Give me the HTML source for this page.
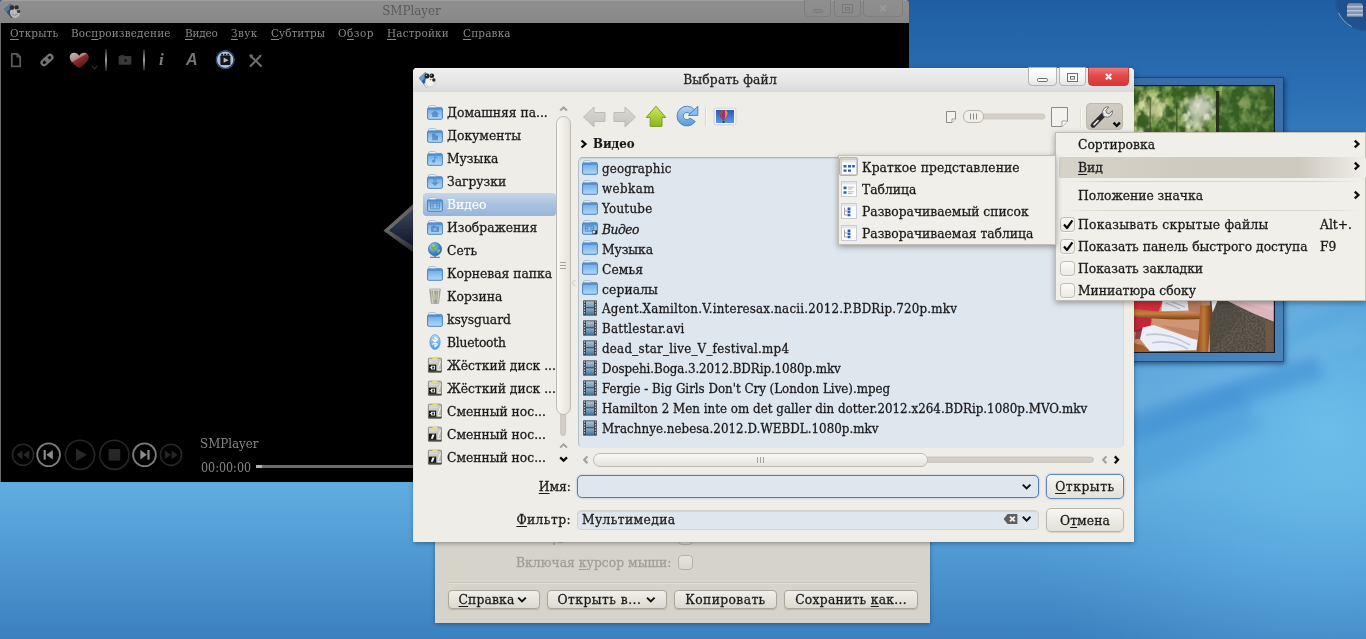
<!DOCTYPE html>
<html lang="ru">
<head>
<meta charset="utf-8">
<title>SMPlayer</title>
<style>
html,body{margin:0;padding:0;}
body{width:1366px;height:639px;overflow:hidden;position:relative;font-family:"DejaVu Serif Condensed","Liberation Serif",serif;font-size:13.7px;color:#1a1a1a;background:#3c80bf;-webkit-text-stroke:.28px;}
.abs{position:absolute;}
u{text-decoration:underline;text-underline-offset:2px;text-decoration-thickness:1px;}
#desk{position:absolute;left:0;top:0;width:1366px;height:639px;background:linear-gradient(180deg,#1f5ea2 0px,#2a6cb1 75px,#3f8acb 250px,#5ba8dc 440px,#60acde 485px,#4e98d2 560px,#3c80bf 639px);}
/* ===== smplayer ===== */
#smp{-webkit-text-stroke:0;position:absolute;left:0;top:0;width:909px;height:482px;background:#000;border-radius:3px 3px 0 0;box-shadow:inset 1px 0 0 #6a6a6a;}
#smp .tb{position:absolute;left:0;top:0;width:909px;height:22.6px;background:linear-gradient(180deg,#a6a6a6 0,#8e8e8e 1.5px,#8c8c8c 50%,#868686 100%);border-radius:3px 3px 0 0;}
#smp .title{position:absolute;left:0;width:823px;top:0;height:22px;line-height:22px;text-align:center;color:#5a5a5a;font-size:13.2px;}
#smp .menu{position:absolute;top:24px;height:18px;line-height:18px;color:#8a8a8a;font-size:11.6px;white-space:nowrap;}
.swb{top:-1px;height:17.6px;box-sizing:border-box;border:1px solid #7d7d7d;border-radius:0 0 4px 4px;background:linear-gradient(180deg,#8f8f8f,#8a8a8a);}
/* ===== back dialog ===== */
#back{position:absolute;left:435px;top:500px;width:495px;height:123px;background:#d6d3ca;box-shadow:0 1px 4px rgba(0,0,0,.35);}
.bbtn{position:absolute;top:590px;height:17px;line-height:17px;border:1px solid #aaa69c;border-radius:4px;background:linear-gradient(180deg,#f1efea,#dcd9d0);text-align:center;white-space:nowrap;box-shadow:0 1px 1px rgba(0,0,0,.15);}
/* ===== file dialog ===== */
#dlg{position:absolute;left:414px;top:68px;width:720px;height:474px;background:#efede8;border-radius:4px 4px 0 0;box-shadow:-1px 0 0 #e9e7e2,0 1px 5px rgba(0,0,0,.38);}
#dlg .tb{position:absolute;left:-1px;top:0;width:721px;height:24px;border-radius:4px 4px 0 0;background:linear-gradient(180deg,#f6f6f6 0,#ededed 8%,#e6e6e6 55%,#d9d9d9 100%);}
#dlg .title{position:absolute;left:-1px;top:0;width:634px;height:23px;line-height:23px;text-align:center;font-size:13.7px;color:#222;letter-spacing:.15px;}
.side{position:absolute;left:33px;height:23px;line-height:23px;white-space:nowrap;margin-top:-.2px;}
.row{position:absolute;left:188px;height:20px;line-height:20px;white-space:nowrap;font-size:13.2px;}
.row.c{font-size:13.7px;}
.wb{top:-1px;height:19px;box-sizing:border-box;border:1px solid #b4b4b4;border-radius:0 0 4px 4px;background:linear-gradient(180deg,#ffffff,#f6f6f6 50%,#e6e6e6);}
#flist{background:#dfe7ee;border:1px solid;border-color:#a7b4c1 #d3dae1 #e2e6ea #b3bfca;border-radius:5px;box-sizing:border-box;box-shadow:inset 0 1px 1px rgba(0,0,0,.08);}
.lbl{height:21px;line-height:21px;text-align:right;white-space:nowrap;}
.dbtn{width:78px;height:24.5px;line-height:23px;box-sizing:border-box;border:1px solid #b9b5aa;border-radius:5px;background:linear-gradient(180deg,#f7f6f3,#e3e0d8);text-align:center;box-shadow:0 1px 1px rgba(0,0,0,.12);}
/* ===== menus ===== */
.pop{position:absolute;background:#f1efea;border:1px solid #c2beb4;box-shadow:0 2px 6px rgba(0,0,0,.35);box-sizing:border-box;}
.mi{position:absolute;height:22px;line-height:22px;white-space:nowrap;margin-top:-.5px;}
.cb{position:absolute;width:15px;height:15px;margin:-.3px 0 0 .3px;box-sizing:border-box;border:1px solid #c0bcb1;border-radius:3.5px;box-shadow:0 1px 0 rgba(255,255,255,.7);background:linear-gradient(180deg,#fbfaf8,#eceae4);}
</style>
</head>
<body>
<div id="root" style="position:absolute;left:0;top:0;width:1366px;height:639px;overflow:hidden;will-change:transform">
<svg width="0" height="0" style="position:absolute">
<defs>
  <linearGradient id="gf" x1="0" y1="0" x2="0" y2="1"><stop offset="0" stop-color="#5f9fdc"/><stop offset=".25" stop-color="#78b4ea"/><stop offset="1" stop-color="#b4d8f6"/></linearGradient>
  <linearGradient id="gfilm1" x1="0" y1="0" x2="0" y2="1"><stop offset="0" stop-color="#b0c4d0"/><stop offset="1" stop-color="#6c96b0"/></linearGradient>
  <linearGradient id="gfilm2" x1="0" y1="0" x2="0" y2="1"><stop offset="0" stop-color="#8eb0c6"/><stop offset="1" stop-color="#3f7698"/></linearGradient>
  <linearGradient id="ggrey" x1="0" y1="0" x2="0" y2="1"><stop offset="0" stop-color="#dcdad4"/><stop offset="1" stop-color="#c4c2bb"/></linearGradient>
  <linearGradient id="ggreen" x1="0" y1="0" x2="0" y2="1"><stop offset="0" stop-color="#d2e860"/><stop offset="1" stop-color="#8cb61e"/></linearGradient>
  <linearGradient id="gblue" x1="0" y1="0" x2="0" y2="1"><stop offset="0" stop-color="#b2d2f2"/><stop offset="1" stop-color="#5c98d8"/></linearGradient>
  <linearGradient id="gprev" x1="0" y1="0" x2="0" y2="1"><stop offset="0" stop-color="#2a56b4"/><stop offset="1" stop-color="#5a9ae6"/></linearGradient>
  <symbol id="folder" viewBox="0 0 16 16">
    <path d="M1.5 3.2 Q1.5 1.6 3 1.6 L7.6 1.6 Q8.6 1.6 9 2.6 L9.4 3.4 L14.5 3.4 L14.5 5 L1.5 5 Z" fill="#f4f8fc" stroke="#8fb2d6" stroke-width=".8"/>
    <rect x=".6" y="3.9" width="14.8" height="11.4" rx="1.2" fill="url(#gf)" stroke="#3f78b4" stroke-width=".9"/>
    <rect x="1.2" y="4.5" width="13.6" height="1.3" fill="#4a86c8" opacity=".75"/>
  </symbol>
  <symbol id="film" viewBox="0 0 16 16">
    <rect x="1.2" y=".4" width="13.6" height="15.2" fill="#3b3d48"/>
    <rect x="4" y="1.3" width="8" height="6" fill="url(#gfilm1)"/>
    <rect x="4" y="8.3" width="8" height="6.6" fill="url(#gfilm2)"/>
    <path d="M2.6 1.4v13.4M13.4 1.4v13.4" stroke="#d8dce4" stroke-width="1" stroke-dasharray="1.4 1.3"/>
  </symbol>
  <symbol id="f-home" viewBox="0 0 16 16"><use href="#folder"/><path d="M8 6.4 L12.2 10 L10.8 10 L10.8 13 L5.2 13 L5.2 10 L3.8 10 Z" fill="#3a6fb2" opacity=".6"/></symbol>
  <symbol id="f-doc" viewBox="0 0 16 16"><use href="#folder"/><path d="M5.2 6.6h3.2v2h2.6v4.6h-5.8z" fill="#3a6fb2" opacity=".6"/></symbol>
  <symbol id="f-music" viewBox="0 0 16 16"><use href="#folder"/><path d="M8.2 6.2 L8.2 11.2 A1.6 1.4 0 1 1 7.2 10 L7.2 6.2 Q10 6.6 11 9 Q9.6 7.8 8.2 7.8Z" fill="#3a6fb2" opacity=".6"/></symbol>
  <symbol id="f-down" viewBox="0 0 16 16"><use href="#folder"/><path d="M6 6.6h4v2.6h2L8 13 4 9.2h2z" fill="#3a6fb2" opacity=".6"/><path d="M5 7.8h6M5 9h6" stroke="#9cc4ea" stroke-width=".5"/></symbol>
  <symbol id="f-video" viewBox="0 0 16 16"><use href="#folder"/><rect x="3.6" y="7" width="8.8" height="6" fill="none" stroke="#3a6fb2" stroke-width="1" opacity=".6"/><path d="M6.2 7v6M9.8 7v6M3.6 10h2.6M9.8 10h2.6" stroke="#3a6fb2" stroke-width=".9" opacity=".6"/></symbol>
  <symbol id="f-img" viewBox="0 0 16 16"><use href="#folder"/><rect x="4" y="7.6" width="8" height="5.4" rx=".8" fill="#3a6fb2" opacity=".6"/><rect x="5.4" y="6.6" width="2.6" height="1.4" fill="#3a6fb2" opacity=".6"/><circle cx="8" cy="10.3" r="1.7" fill="#7fb2e6"/></symbol>
  <symbol id="f-vlink" viewBox="0 0 16 16"><use href="#folder"/><rect x="3.4" y="6.8" width="8" height="5.4" fill="none" stroke="#3a6fb2" stroke-width="1" opacity=".6"/><path d="M5.8 6.8v5.4M9 6.8v5.4M3.4 9.5h2.4M9 9.5h2.4" stroke="#3a6fb2" stroke-width=".9" opacity=".6"/><path d="M10.6 15 L15 15 L15 10.8 Z" fill="#2a2a2a"/><rect x="10.4" y="11.6" width="2.8" height="2.8" fill="#e8e8e8" stroke="#444" stroke-width=".6"/></symbol>
  <radialGradient id="gglobe" cx=".35" cy=".3" r=".8"><stop offset="0" stop-color="#bfe0fa"/><stop offset=".5" stop-color="#4a92de"/><stop offset="1" stop-color="#1f5cae"/></radialGradient>
  <symbol id="globe" viewBox="0 0 16 16"><circle cx="8" cy="7.2" r="6.6" fill="url(#gglobe)" stroke="#2c62a8" stroke-width=".6"/>
    <path d="M5 3 Q8 1.6 9.6 3.4 Q10 5.4 8 6.2 Q8.6 8.4 6.6 9.6 Q5 8.6 4.6 6.6 Q3 5.4 5 3Z" fill="#6fb83c"/><path d="M10.4 7.4 Q12.8 6.8 13.2 8.6 Q12.4 11 10.6 11 Q9.6 9 10.4 7.4Z" fill="#8cc648"/><path d="M5.4 3.4 Q7 2.6 8 3.6 Q7 5 5.6 4.8Z" fill="#d8e87a" opacity=".8"/>
    <path d="M3 15.3h10" stroke="#6a6a6a" stroke-width="1"/><path d="M8 13.8v1.5" stroke="#6a6a6a" stroke-width="1.4"/></symbol>
  <linearGradient id="gtrash" x1="0" y1="0" x2="1" y2="0"><stop offset="0" stop-color="#8a8a84"/><stop offset=".3" stop-color="#e8e8e2"/><stop offset=".55" stop-color="#a6a69e"/><stop offset=".8" stop-color="#dededa"/><stop offset="1" stop-color="#7c7c76"/></linearGradient>
  <symbol id="trash" viewBox="0 0 16 16"><path d="M2.6 1 L13.4 1 L11.6 15.4 L4.4 15.4 Z" fill="url(#gtrash)" stroke="#8a8a84" stroke-width=".6"/><path d="M5.4 2 L6.4 14.6 M8 2v12.6 M10.6 2 L9.6 14.6" stroke="#77776f" stroke-width=".8" opacity=".7"/><path d="M2.6 1 L13.4 1 L13.1 3 L2.9 3Z" fill="#c9c9c2" opacity=".9"/><ellipse cx="8" cy="9" rx="2" ry="3.4" fill="#d8c890" opacity=".55"/></symbol>
  <linearGradient id="gbt" x1="0" y1="0" x2="0" y2="1"><stop offset="0" stop-color="#b8dcfa"/><stop offset="1" stop-color="#4a98e4"/></linearGradient>
  <symbol id="bt" viewBox="0 0 16 16"><ellipse cx="8" cy="8" rx="5.2" ry="7.4" fill="url(#gbt)" stroke="#5a9ada" stroke-width=".7"/><path d="M5.4 5.4 L10.4 10.4 L8 12.8 L8 3.2 L10.4 5.6 L5.4 10.6" fill="none" stroke="#fff" stroke-width="1.1" stroke-linejoin="round"/></symbol>
  <linearGradient id="ghdd" x1="0" y1="0" x2="1" y2="1"><stop offset="0" stop-color="#dcdcd6"/><stop offset="1" stop-color="#b4b4ac"/></linearGradient>
  <symbol id="hdd" viewBox="0 0 16 16"><rect x="1.4" y="1.2" width="13" height="14" rx=".8" fill="url(#ghdd)" stroke="#77776f" stroke-width=".8"/><rect x="1.2" y="13.6" width="13.4" height="1.8" fill="#4a4a46"/><rect x="5.4" y=".8" width="5" height="2" fill="#ece45c"/><path d="M13.4 4.4 L10.8 11.6" stroke="#f2f2ec" stroke-width="1.1"/><path d="M3 4.6h8" stroke="#dadad2" stroke-width="1"/>
    <rect x="1.8" y="7.6" width="7.4" height="6.2" fill="#16161a"/><rect x="4.4" y="9.2" width="3.2" height="2.8" fill="none" stroke="#f4f4f4" stroke-width=".9"/><path d="M2.8 10.6h2.6" stroke="#f4f4f4" stroke-width=".9"/><rect x="10.4" y="12.2" width="3.4" height="1.2" fill="#f4f4f4"/></symbol>
  <symbol id="rem" viewBox="0 0 16 16"><rect x="1.4" y="1.2" width="13" height="14" rx=".8" fill="url(#ghdd)" stroke="#77776f" stroke-width=".8"/><rect x="1.2" y="13.6" width="13.4" height="1.8" fill="#4a4a46"/><rect x="5.4" y=".8" width="5" height="2" fill="#ece45c"/><path d="M13.4 4.4 L10.8 11.6" stroke="#f2f2ec" stroke-width="1.1"/><path d="M3 4.6h8" stroke="#dadad2" stroke-width="1"/>
    <rect x="1.8" y="7.6" width="7.4" height="6.2" fill="#16161a"/><path d="M3.8 12.8 L5.4 8.6 L7.6 8.6 L6 12.8Z" fill="#f4f4f4"/><rect x="10.4" y="12.2" width="3.4" height="1.2" fill="#f4f4f4"/></symbol>
</defs>
</svg>
<div id="desk"></div>
<!-- wallpaper glow + rays -->
<svg class="abs" style="left:0;top:0" width="1366" height="639" viewBox="0 0 1366 639">
  <defs>
    <radialGradient id="glow" cx="1330" cy="430" r="330" gradientUnits="userSpaceOnUse"><stop offset="0" stop-color="#70c2ec" stop-opacity=".85"/><stop offset=".4" stop-color="#66b8e8" stop-opacity=".5"/><stop offset="1" stop-color="#5aa8dc" stop-opacity="0"/></radialGradient>
    <filter id="bgblur" x="-10%" y="-10%" width="120%" height="120%"><feGaussianBlur stdDeviation="6"/></filter>
    <linearGradient id="ray" x1="0" y1="0" x2="1" y2="0"><stop offset="0" stop-color="#fff" stop-opacity="0"/><stop offset="1" stop-color="#fff" stop-opacity=".09"/></linearGradient>
  </defs>
  <rect x="850" y="60" width="516" height="579" fill="url(#glow)"/>
  <g filter="url(#bgblur)">
    <path d="M1120 432 Q1215 398 1320 366" fill="none" stroke="#3c8ad0" stroke-width="26" opacity=".5"/>
    <path d="M1110 470 Q1180 440 1250 405" fill="none" stroke="#3c8ad0" stroke-width="50" opacity=".28"/>
    <path d="M1366 300 Q1318 310 1278 334 L1278 250 L1366 225 Z" fill="#fff" opacity=".08"/>
    <path d="M1125 362 L1290 362 L1290 345 L1366 310 L1366 345 Q1240 372 1125 412 Z" fill="#fff" opacity=".05"/>
  </g>
</svg>
<!-- picture frame widget -->
<div class="abs" style="left:1120px;top:78px;width:163px;height:283px;background:rgba(62,110,166,.68);box-shadow:0 0 0 1px rgba(24,56,110,.6),1px 2px 5px 1px rgba(0,20,60,.55)"></div>
<svg class="abs" style="left:1130px;top:85px" width="145" height="268" viewBox="0 0 145 268">
  <defs>
    <filter id="leaf" color-interpolation-filters="sRGB" x="0" y="0" width="100%" height="100%"><feTurbulence type="fractalNoise" baseFrequency=".09 .07" numOctaves="3" seed="7" result="n"/>
      <feColorMatrix in="n" type="matrix" values="0 0 0 0 .22  0 0 0 0 .37  0 0 0 0 .14  -4.2 0 0 0 2.75"/></filter>
    <filter id="soft" color-interpolation-filters="sRGB" x="-20%" y="-20%" width="140%" height="140%"><feGaussianBlur stdDeviation="3"/></filter>
    <filter id="leaf2" color-interpolation-filters="sRGB" x="0" y="0" width="100%" height="100%"><feTurbulence type="fractalNoise" baseFrequency=".12 .1" numOctaves="2" seed="3" result="n"/>
      <feColorMatrix in="n" type="matrix" values="0 0 0 0 .86  0 0 0 0 .88  0 0 0 0 .6  0 5 0 0 -2.85"/></filter>
    <filter id="grit" color-interpolation-filters="sRGB" x="0" y="0" width="100%" height="100%"><feTurbulence type="fractalNoise" baseFrequency=".5" numOctaves="2" seed="5"/>
      <feColorMatrix type="matrix" values="0 0 0 0 .2  0 0 0 0 .18  0 0 0 0 .14  0 0 1.6 0 -.55"/></filter>
    <linearGradient id="wood" x1="0" y1="0" x2="1" y2="0"><stop offset="0" stop-color="#8a4a1c"/><stop offset=".5" stop-color="#c07838"/><stop offset="1" stop-color="#7a3c14"/></linearGradient>
    <linearGradient id="wood2" x1="0" y1="0" x2="0" y2="1"><stop offset="0" stop-color="#a8602a"/><stop offset=".5" stop-color="#c4803e"/><stop offset="1" stop-color="#7a3c14"/></linearGradient>
  </defs>
  <rect width="145" height="268" fill="#0c1a2c"/>
  <!-- foliage -->
  <rect x="0" y="1" width="144" height="60" fill="#7a9c4e"/>
  <g filter="url(#soft)"><ellipse cx="68" cy="24" rx="17" ry="14" fill="#e2e2d2"/><ellipse cx="62" cy="40" rx="9" ry="8" fill="#dfe4c0"/><ellipse cx="22" cy="22" rx="16" ry="14" fill="#d4dc9c"/><ellipse cx="8" cy="40" rx="8" ry="12" fill="#cfe0a0"/><ellipse cx="112" cy="18" rx="10" ry="6" fill="#c4d08a"/></g>
  <rect x="0" y="1" width="144" height="60" filter="url(#leaf)"/>
  <g filter="url(#soft)" opacity=".85"><ellipse cx="70" cy="22" rx="13" ry="10" fill="#dcdccf"/><ellipse cx="66" cy="38" rx="7" ry="7" fill="#d8dcc0"/><ellipse cx="25" cy="24" rx="9" ry="8" fill="#d0d8a0"/></g>
  <rect x="0" y="1" width="144" height="60" filter="url(#leaf2)" opacity=".45"/>
  <rect x="92" y="1" width="52" height="60" fill="#335c26" opacity=".42"/>
  <rect x="86" y="6" width="3.2" height="55" fill="#27301c"/><rect x="19.5" y="14" width="1.6" height="47" fill="#4a5230" opacity=".7"/><rect x="46" y="18" width="1.6" height="43" fill="#3c4a28" opacity=".7"/>
  <!-- bottom part -->
  <g transform="translate(0,216)">
    <rect x="0" y="0" width="145" height="52.4" fill="#c58a6c"/>
    <rect x="80" y="0" width="65" height="52.4" fill="#625c52"/><rect x="80" y="0" width="65" height="52.4" filter="url(#grit)" opacity=".8"/>
    <path d="M80 0 L100 0 L112 12 L100 30 L80 52 Z" fill="#4c463e" opacity=".45"/>
    <path d="M97.6 0 L144.5 0 L144.5 20.9 L123.9 12.8 Z" fill="#dcb6bc"/><path d="M110 0 L144.5 0 L144.5 10 Z" fill="#e6c8cc" opacity=".7"/>
    <path d="M135 19 L144.5 21 L144.5 52.4 L136 52.4 Z" fill="#7a5a42" opacity=".75"/>
    <path d="M81.4 0 L87.4 0 L82.6 11.5 Z" fill="#eef0f4"/>
    <path d="M0 0 L32.5 0 L28.8 10.3 L21.9 17.8 L20 27.8 L5 31 L0 31 Z" fill="#d32c3c"/><path d="M0 14 L21 16 L20 27.8 L5 31 L0 31 Z" fill="#b82434" opacity=".6"/>
    <path d="M32.5 0 L57.6 0 L58.8 9.6 L31.3 10.3 Z" fill="#e4e4ec"/><path d="M36 2 L50 8 M42 1 L55 6" stroke="#aeb2c4" stroke-width="1.2" fill="none"/>
    <path d="M57.6 0 L72 0 L70 12 L58.8 10 Z" fill="#b87a60"/>
    <path d="M21.3 17.8 L70 19 L70 36.6 L62.6 37.8 L23.8 24 Z" fill="#cf9676"/><path d="M30 24 L62.6 37.8 L70 36.6 L70 30 Z" fill="#b87a5c" opacity=".6"/>
    <path d="M12.5 26.5 L23.8 24 L62.6 37.8 L67.6 39 L66.3 49.6 L20 50.3 L10 38 Z" fill="#eceef6"/>
    <path d="M16 34 Q36 30 60 44 M22 42 Q40 38 58 48" stroke="#c2c8dc" stroke-width="1.6" fill="none"/>
    <path d="M5 38 L10 38 L12.5 26.5 L6 30 Z" fill="#7c2430" opacity=".7"/>
    <path d="M0 7.1 Q36 13 72.6 11.5 L72.6 17.8 Q36 20 0 14.7 Z" fill="url(#wood2)"/>
    <path d="M70.1 4.6 L81.4 4.6 L80 30 L77.6 52.4 L66.3 52.4 L69 30 Z" fill="url(#wood)"/>
    <path d="M0 41.6 L12.5 44 L20 50.3 L66 49.6 L66 52.4 L0 52.4 Z" fill="#a4602c"/>
  </g>
  <rect x="0" y="0" width="145" height="1.2" fill="#0c1a2c"/><rect x="143.8" y="0" width="1.2" height="268" fill="#0c1a2c"/><rect x="0" y="267" width="145" height="1.2" fill="#0c1a2c"/>
</svg>
<!-- cashew -->
<svg class="abs" style="left:1326px;top:0" width="40" height="40" viewBox="0 0 40 40">
  <defs><radialGradient id="gcash" cx="40" cy="0" r="32" gradientUnits="userSpaceOnUse"><stop offset="0" stop-color="#1c4c88"/><stop offset=".9" stop-color="#1f5290"/><stop offset=".97" stop-color="#245a9c"/><stop offset="1" stop-color="#2464a8" stop-opacity="0"/></radialGradient></defs>
  <circle cx="40" cy="0" r="32" fill="url(#gcash)"/>
  <path d="M12.54 12.8 A30.3 30.3 0 0 0 25.78 26.75" fill="none" stroke="#a9cdf2" stroke-width=".9" opacity=".75"/>
  <path d="M22.6 3.2 L35.4 3.2 L37 5.6 L37 16.8 L21 16.8 L21 5.6 Z" fill="#8494b0"/>
  <path d="M21 6.8h16M21 10.8h16M21 14.8h16" stroke="#b4c0d4" stroke-width="1.6"/>
</svg>
<!-- SMPLAYER -->
<div id="smp">
  <div class="tb"></div>
  <div class="title">SMPlayer</div>
  <!-- app icon -->
  <svg class="abs" style="left:3px;top:2px" width="20" height="18" viewBox="0 0 20 18">
    <path d="M1 7 L7.5 1.5 L13 9 L8.5 16.5 Z" fill="#34506f"/><path d="M1 7 L7.5 1.5 L9 4 L3.5 10.5Z" fill="#5d7897"/>
    <ellipse cx="12" cy="10.5" rx="5" ry="5.4" fill="#b9b9b9"/><circle cx="9" cy="5.6" r="2.4" fill="#2e2e2e"/><circle cx="13.6" cy="5.4" r="2.2" fill="#2e2e2e"/><circle cx="15.6" cy="9.4" r="1.7" fill="#3a3a3a"/>
    <path d="M9 12 q2.6 3 5.4 0" stroke="#8a8a8a" fill="none"/>
  </svg>
  <!-- window buttons (dimmed) -->
  <div class="abs swb" style="left:804px;width:27px"></div>
  <div class="abs swb" style="left:834px;width:27px"></div>
  <div class="abs swb" style="left:863px;width:40px"></div>
  <svg class="abs" style="left:804px;top:0" width="100" height="17" viewBox="0 0 100 17">
    <rect x="9.5" y="9.5" width="9" height="2.6" rx="1" fill="none" stroke="#777" stroke-width="1"/>
    <rect x="38.5" y="4.5" width="10" height="8" fill="none" stroke="#777" stroke-width="1"/><rect x="41.5" y="7.5" width="4" height="2.4" fill="none" stroke="#777" stroke-width="1"/>
    <path d="M76.5 5.5 L82 11 M82 5.5 L76.5 11" stroke="#9a9a9a" stroke-width="2"/>
  </svg>
  <div class="menu" style="left:10px;letter-spacing:0.15px"><u>О</u>ткрыть</div>
  <div class="menu" style="left:71px;letter-spacing:0.17px">Вос<u>п</u>роизведение</div>
  <div class="menu" style="left:185px;letter-spacing:-0.18px"><u>В</u>идео</div>
  <div class="menu" style="left:231px;letter-spacing:0.39px"><u>З</u>вук</div>
  <div class="menu" style="left:271px;letter-spacing:0.02px"><u>С</u>убтитры</div>
  <div class="menu" style="left:338px;letter-spacing:0.50px">О<u>б</u>зор</div>
  <div class="menu" style="left:387px;letter-spacing:0.17px"><u>Н</u>астройки</div>
  <div class="menu" style="left:463px;letter-spacing:0.19px"><u>С</u>правка</div>
  <!-- toolbar -->
  <svg class="abs" style="left:0;top:46px" width="280" height="28" viewBox="0 0 280 28">
    <defs><linearGradient id="gsep" x1="0" y1="0" x2="0" y2="1"><stop offset="0" stop-color="#222"/><stop offset=".5" stop-color="#c4c4c4"/><stop offset="1" stop-color="#222"/></linearGradient>
    <linearGradient id="gheart" x1=".1" y1="0" x2=".75" y2=".9"><stop offset="0" stop-color="#c9b4b4"/><stop offset=".42" stop-color="#b08a8a"/><stop offset=".5" stop-color="#8a2c2c"/><stop offset="1" stop-color="#5e1616"/></linearGradient></defs>
    <path d="M11.8 7.8 L17.2 7.8 L20.2 10.8 L20.2 20.4 L11.8 20.4 Z" fill="none" stroke="#5c5c5c" stroke-width="1.7" stroke-linejoin="round"/><path d="M17 8 L17 11 L20 11" fill="none" stroke="#6a6a6a" stroke-width="1"/>
    <g fill="none" stroke="#747474" stroke-width="2.2" transform="rotate(-42 47 14)"><rect x="40.6" y="11.5" width="7.4" height="5" rx="2.5"/><rect x="46" y="11.5" width="7.4" height="5" rx="2.5"/></g>
    <path d="M79.2 22 C72 17.4 69.4 13.6 69.8 10.4 C70.2 7 74 5.6 77 7.6 C78.2 8.4 78.8 9.2 79.2 9.8 C79.6 9.2 80.2 8.4 81.4 7.6 C84.4 5.6 88.4 7 88.8 10.4 C89.2 13.6 86.4 17.4 79.2 22 Z" fill="url(#gheart)"/>
        <path d="M92 20 l2.6 3 l2.6 -3" fill="none" stroke="#2c2626" stroke-width="1.4"/>
    <rect x="105.2" y="3" width="1.6" height="22" fill="url(#gsep)"/>
    <rect x="118.6" y="10" width="12.8" height="8.8" rx=".8" fill="#383838"/><rect x="120.4" y="9" width="3.6" height="1.6" fill="#383838"/><circle cx="125.6" cy="14.4" r="2.5" fill="#1e1e1e" stroke="#4c4c4c" stroke-width=".8"/>
    <rect x="143.2" y="3" width="1.6" height="22" fill="url(#gsep)"/>
    <circle cx="225.2" cy="13.7" r="9.2" fill="#a9b7c8"/><circle cx="225.2" cy="13.7" r="8.8" fill="none" stroke="#27477a" stroke-width="1.6"/>
    <circle cx="225.2" cy="13.7" r="7.4" fill="none" stroke="#c6d0dc" stroke-width="1" opacity=".7"/>
    <rect x="220.4" y="9.4" width="10" height="9.6" rx=".8" fill="#10141c"/><path d="M221.2 9.6v-1.8h1.8v1.8M224.3 9.6v-1.8h1.8v1.8M227.4 9.6v-1.8h1.8v1.8" fill="#10141c"/>
    <path d="M223.6 11.6 L228.6 14.2 L223.6 16.8 Z" fill="#b8b8b4"/>
    <g stroke="#6e6e6e" stroke-width="2.1" stroke-linecap="round"><path d="M251.2 10.4 L261 20"/><path d="M260.4 10 L250.6 20"/></g>
    <path d="M249.6 8.4 q2.6 -.8 3.6 1.6 l-2 2 q-2.4 -1 -1.6 -3.6z M262 8.2 l-3 1.4 l.6 1.8 l2.4 -3.2z" fill="#6e6e6e"/>
  </svg>
  <div class="abs" style="left:159px;top:50px;height:20px;line-height:20px;font-family:'Liberation Serif',serif;font-style:italic;font-weight:bold;font-size:17px;color:#7c7c7c">i</div>
  <div class="abs" style="left:186px;top:50px;height:20px;line-height:20px;font-family:'Liberation Sans',sans-serif;font-style:italic;font-weight:bold;font-size:16px;color:#767676">A</div>
  <!-- logo tip -->
  <svg class="abs" style="left:376px;top:196px" width="40" height="66" viewBox="0 0 40 66">
    <defs><linearGradient id="glogo" x1="0" y1="0" x2="0" y2="1"><stop offset="0" stop-color="#5e5e5e"/><stop offset=".5" stop-color="#6c6c6c"/><stop offset="1" stop-color="#1c1c1c"/></linearGradient>
    <linearGradient id="glogo2" x1="0" y1="0" x2="0" y2="1"><stop offset="0" stop-color="#3e4c64"/><stop offset="1" stop-color="#0e1526"/></linearGradient>
    <filter id="lblur" x="-10%" y="-10%" width="120%" height="120%"><feGaussianBlur stdDeviation=".7"/></filter></defs>
    <g filter="url(#lblur)"><path d="M7.5 34.8 L40 5.5 L40 58.6 Z" fill="url(#glogo)"/>
    <path d="M13 34.4 L40 10.6 L40 52 Z" fill="url(#glogo2)"/></g>
  </svg>
  <!-- controls -->
  <svg class="abs" style="left:0;top:436px" width="200" height="38" viewBox="0 0 200 38">
    <g fill="none" stroke="#272727" stroke-width="1.6"><circle cx="23" cy="18.8" r="10.6"/><circle cx="80" cy="18.8" r="14.6"/><circle cx="114.4" cy="18.8" r="14.6"/><circle cx="171" cy="18.8" r="10.6"/></g>
    <g fill="none" stroke="#7c7c7c" stroke-width="1.8"><circle cx="48.6" cy="18.8" r="11.4"/><circle cx="144.5" cy="18.8" r="11.4"/></g>
    <path d="M22.4 14.4 L16.4 18.8 L22.4 23.2 Z M29.2 14.4 L23.2 18.8 L29.2 23.2 Z M171.6 14.4 L177.6 18.8 L171.6 23.2 Z M164.8 14.4 L170.8 18.8 L164.8 23.2 Z" fill="#272727"/>
    <path d="M76 12.4 L87 18.8 L76 25.2 Z" fill="#272727"/><rect x="108.6" y="13" width="11.6" height="11.6" fill="#272727"/>
    <path d="M52.8 14 L46.4 18.8 L52.8 23.6 Z" fill="#8c8c8c"/><rect x="43.6" y="14" width="2.2" height="9.6" fill="#8c8c8c"/>
    <path d="M140.4 14 L146.8 18.8 L140.4 23.6 Z" fill="#8c8c8c"/><rect x="147.4" y="14" width="2.2" height="9.6" fill="#8c8c8c"/>
  </svg>
  <div class="abs" style="left:200px;top:435.2px;height:18px;line-height:18px;color:#858585;font-size:13.2px">SMPlayer</div>
  <div class="abs" style="left:201px;top:458.6px;height:18px;line-height:18px;color:#858585;font-size:12.4px">00:00:00</div>
  <div class="abs" style="left:262px;top:464.6px;width:160px;height:3.4px;background:#6c6c6c"></div>
  <div class="abs" style="left:256px;top:464.6px;width:6px;height:3.4px;background:#b2b2b2"></div>
</div>
<!-- BACK DIALOG -->
<div id="back"></div>
<div class="abs" style="left:553px;top:541px;width:2px;height:4px;background:#b4b1a8"></div><div class="abs" style="left:558px;top:542px;width:5px;height:1px;background:#b4b1a8"></div>
<div class="abs" style="left:678px;top:530px;width:15px;height:15px;box-sizing:border-box;border:1px solid #b5b1a6;border-radius:4px;background:linear-gradient(180deg,#e6e3dc,#dad7ce)"></div>
<div class="abs" style="left:516px;top:552.5px;height:19px;line-height:19px;color:#a19e95;white-space:nowrap;letter-spacing:.05px">Включая <u>к</u>урсор мыши:</div>
<div class="abs" style="left:678px;top:554.5px;width:15px;height:15px;box-sizing:border-box;border:1px solid #b5b1a6;border-radius:4px;background:linear-gradient(180deg,#e6e3dc,#dad7ce)"></div>
<div class="abs" style="left:447px;top:582px;width:471px;height:1px;background:#c9c5bb"></div><div class="abs" style="left:447px;top:583px;width:471px;height:1px;background:#e2dfd7"></div>
<div class="bbtn" style="left:448px;width:90px;text-align:left;text-indent:9.5px;letter-spacing:.15px"><u>С</u>правка</div>
<div class="bbtn" style="left:547px;width:118px;text-align:left;text-indent:9.5px;letter-spacing:.45px">Открыть в...</div>
<div class="bbtn" style="left:674px;width:101px;letter-spacing:.4px">Копировать</div>
<div class="bbtn" style="left:784px;width:132px;letter-spacing:.27px">Сохранить <u>к</u>ак...</div>
<svg class="abs" style="left:516px;top:594px" width="140" height="12" viewBox="0 0 140 12"><path d="M2.2 3.6 L6 7.4 L9.8 3.6 M131 3.6 L134.8 7.4 L138.6 3.6" fill="none" stroke="#111" stroke-width="1.9"/></svg>
<!-- FILE DIALOG -->
<div id="dlg">
  <div class="tb"></div>
  <div class="title">Выбрать файл</div>
  <!-- app icon -->
  <svg class="abs" style="left:3px;top:2px" width="22" height="20" viewBox="0 0 22 20">
    <path d="M2 8 L8.5 2 L14 10.5 L9.5 18 Z" fill="#2f5c98"/><path d="M2 8 L8.5 2 L10.4 5 L4.6 11.6Z" fill="#6c9bd2"/><path d="M9.5 18 L14 10.5 L11 9 L7 14Z" fill="#e6ecf4"/>
    <ellipse cx="13.2" cy="11.4" rx="4.8" ry="5.6" fill="#f2f2f2" stroke="#b8b8b8" stroke-width=".6"/><circle cx="10" cy="6" r="2.5" fill="#1c1c1c"/><circle cx="14.8" cy="5.8" r="2.3" fill="#1c1c1c"/><circle cx="16.8" cy="10" r="1.7" fill="#2a2a2a"/>
    <circle cx="9.4" cy="5.4" r=".8" fill="#9aa"/><circle cx="14.2" cy="5.2" r=".8" fill="#9aa"/><path d="M12.6 8.6 l2.4 .8 l-2 1.2z" fill="#c07a28"/>
  </svg>
  <!-- window buttons -->
  <div class="abs wb" style="left:614px;width:29px"></div>
  <div class="abs wb" style="left:645px;width:27px"></div>
  <div class="abs wb" style="left:674px;width:41px;border-color:#c04444;background:linear-gradient(180deg,#f47474,#e24a4a 45%,#d63636)"></div>
  <svg class="abs" style="left:614px;top:0" width="102" height="18" viewBox="0 0 102 18">
    <rect x="9.5" y="10.5" width="10" height="3" rx="1.2" fill="#fff" stroke="#6e6e6e" stroke-width="1"/>
    <rect x="39.5" y="5.5" width="10" height="8" fill="#fff" stroke="#6e6e6e" stroke-width="1"/><rect x="42.5" y="8.5" width="4" height="2.6" fill="#fff" stroke="#6e6e6e" stroke-width="1"/>
    <path d="M78 6 L83.2 11.2 M83.2 6 L78 11.2" stroke="#fff" stroke-width="2.3"/>
  </svg>
  <!-- sidebar -->
  <div class="abs" style="left:9px;top:125.4px;width:132.5px;height:22.2px;border-radius:3.5px;background:linear-gradient(180deg,#c6d6e9,#a9c2e0 50%,#97b5d9)"></div>
  <svg class="abs sic" style="left:13px;top:35.5px" width="16" height="16"><use href="#f-home"/></svg><div class="side" style="top:33.5px">Домашняя па...</div>
  <svg class="abs sic" style="left:13px;top:58.5px" width="16" height="16"><use href="#f-doc"/></svg><div class="side" style="top:56.5px">Документы</div>
  <svg class="abs sic" style="left:13px;top:81.5px" width="16" height="16"><use href="#f-music"/></svg><div class="side" style="top:79.5px">Музыка</div>
  <svg class="abs sic" style="left:13px;top:104.5px" width="16" height="16"><use href="#f-down"/></svg><div class="side" style="top:102.5px">Загрузки</div>
  <svg class="abs sic" style="left:13px;top:127.5px" width="16" height="16"><use href="#f-video"/></svg><div class="side" style="left:33px;top:125.5px;color:#fff;-webkit-text-stroke:.1px">Видео</div>
  <svg class="abs sic" style="left:13px;top:150.5px" width="16" height="16"><use href="#f-img"/></svg><div class="side" style="top:148.5px">Изображения</div>
  <svg class="abs sic" style="left:13px;top:173.5px" width="16" height="16"><use href="#globe"/></svg><div class="side" style="top:171.5px">Сеть</div>
  <svg class="abs sic" style="left:13px;top:196.5px" width="16" height="16"><use href="#folder"/></svg><div class="side" style="top:194.5px">Корневая папка</div>
  <svg class="abs sic" style="left:13px;top:219.5px" width="16" height="16"><use href="#trash"/></svg><div class="side" style="top:217.5px">Корзина</div>
  <svg class="abs sic" style="left:13px;top:242.5px" width="16" height="16"><use href="#folder"/></svg><div class="side" style="top:240.5px">ksysguard</div>
  <svg class="abs sic" style="left:13px;top:265.5px" width="16" height="16"><use href="#bt"/></svg><div class="side" style="top:263.5px;letter-spacing:-.25px">Bluetooth</div>
  <svg class="abs sic" style="left:13px;top:288.5px" width="16" height="16"><use href="#hdd"/></svg><div class="side" style="top:286.5px">Жёсткий диск ...</div>
  <svg class="abs sic" style="left:13px;top:311.5px" width="16" height="16"><use href="#hdd"/></svg><div class="side" style="top:309.5px">Жёсткий диск ...</div>
  <svg class="abs sic" style="left:13px;top:334.5px" width="16" height="16"><use href="#hdd"/></svg><div class="side" style="top:332.5px">Сменный нос...</div>
  <svg class="abs sic" style="left:13px;top:357.5px" width="16" height="16"><use href="#rem"/></svg><div class="side" style="top:355.5px">Сменный нос...</div>
  <svg class="abs sic" style="left:13px;top:380.5px" width="16" height="16"><use href="#rem"/></svg><div class="side" style="top:378.5px">Сменный нос...</div>
  <!-- file list -->
  <div class="abs" id="flist" style="left:164px;top:88.5px;width:546px;height:291.5px"></div>
  <svg class="abs" style="left:168px;top:91px" width="16" height="16"><use href="#folder"/></svg><div class="row" style="top:91px;letter-spacing:0.17px">geographic</div>
  <svg class="abs" style="left:168px;top:111px" width="16" height="16"><use href="#folder"/></svg><div class="row" style="top:111px;letter-spacing:0.45px">webkam</div>
  <svg class="abs" style="left:168px;top:131px" width="16" height="16"><use href="#folder"/></svg><div class="row" style="top:131px;letter-spacing:0.29px">Youtube</div>
  <svg class="abs" style="left:168px;top:151px" width="16" height="16"><use href="#f-vlink"/></svg><div class="row c" style="top:151px;letter-spacing:-0.50px"><i>Видео</i></div>
  <svg class="abs" style="left:168px;top:171px" width="16" height="16"><use href="#folder"/></svg><div class="row c" style="top:171px;letter-spacing:-0.07px">Музыка</div>
  <svg class="abs" style="left:168px;top:191px" width="16" height="16"><use href="#folder"/></svg><div class="row c" style="top:191px;letter-spacing:0.05px">Семья</div>
  <svg class="abs" style="left:168px;top:211px" width="16" height="16"><use href="#folder"/></svg><div class="row c" style="top:211px;letter-spacing:0.11px">сериалы</div>
  <svg class="abs" style="left:168px;top:232px" width="16" height="16"><use href="#film"/></svg><div class="row" style="top:231px;letter-spacing:0.21px">Agent.Xamilton.V.interesax.nacii.2012.P.BDRip.720p.mkv</div>
  <svg class="abs" style="left:168px;top:252px" width="16" height="16"><use href="#film"/></svg><div class="row" style="top:251px;letter-spacing:0.21px">Battlestar.avi</div>
  <svg class="abs" style="left:168px;top:272px" width="16" height="16"><use href="#film"/></svg><div class="row" style="top:271px;letter-spacing:0.24px">dead_star_live_V_festival.mp4</div>
  <svg class="abs" style="left:168px;top:292px" width="16" height="16"><use href="#film"/></svg><div class="row" style="top:291px;letter-spacing:-0.07px">Dospehi.Boga.3.2012.BDRip.1080p.mkv</div>
  <svg class="abs" style="left:168px;top:312px" width="16" height="16"><use href="#film"/></svg><div class="row" style="top:311px;letter-spacing:-0.01px">Fergie - Big Girls Don't Cry (London Live).mpeg</div>
  <svg class="abs" style="left:168px;top:332px" width="16" height="16"><use href="#film"/></svg><div class="row" style="top:331px;letter-spacing:0.02px">Hamilton 2 Men inte om det galler din dotter.2012.x264.BDRip.1080p.MVO.mkv</div>
  <svg class="abs" style="left:168px;top:352px" width="16" height="16"><use href="#film"/></svg><div class="row" style="top:351px;letter-spacing:0.05px">Mrachnye.nebesa.2012.D.WEBDL.1080p.mkv</div>
  <!-- toolbar -->
  <svg class="abs" style="left:168px;top:37.3px" width="160" height="24" viewBox="0 0 160 24">
    <path d="M1.5 12 L12 2 L12 7.5 L23 7.5 L23 16.5 L12 16.5 L12 22 Z" fill="url(#ggrey)" stroke="#bdbbb4" stroke-width="1"/>
    <path d="M53.5 12 L43 2 L43 7.5 L32 7.5 L32 16.5 L43 16.5 L43 22 Z" fill="url(#ggrey)" stroke="#bdbbb4" stroke-width="1"/>
    <path d="M74 1.2 L83.8 12.4 L80 12.4 L80 21.4 L68.2 21.4 L68.2 12.4 L64.2 12.4 Z" fill="url(#ggreen)" stroke="#7a9e1e" stroke-width="1" stroke-linejoin="round"/>
    <path d="M112.70 5.00 A9.9 9.9 0 1 0 113.20 16.49 L107.92 13.06 A3.6 3.6 0 1 1 107.74 8.88 Z" fill="url(#gblue)" stroke="#4a86c6" stroke-width="1" stroke-linejoin="round"/>
    <path d="M115.8 1.2 L115.8 10.4 L106.3 10.4 Z" fill="#8dbdea" stroke="#4a86c6" stroke-width="1" stroke-linejoin="round"/>
    <path d="M123.5 3v18" stroke="#dad7cf" stroke-width="1"/><path d="M124.5 3v18" stroke="#f9f8f5" stroke-width="1"/>
    <rect x="133.2" y="4.3" width="19.6" height="14.4" rx=".8" fill="url(#gprev)" stroke="#fafafa" stroke-width="1.5"/>
    <rect x="132.1" y="3.2" width="21.8" height="16.6" rx="1.6" fill="none" stroke="#c2c6d0" stroke-width=".7"/>
    <path d="M137.4 8.4 Q137.4 4.8 141.6 4.9 Q145.8 4.8 145.8 8.4 Q145.6 11.6 142.4 15.6 L140.8 15.6 Q137.6 11.6 137.4 8.4 Z" fill="#a32a86"/>
    <path d="M137.5 8 Q138.2 5.2 140.4 5 Q139.6 9 141 15 Q137.8 11.4 137.5 8 Z" fill="#8a5a30"/>
    <path d="M145.7 8 Q145 5.2 143 5 Q144 9 142.3 15 Q145.4 11.4 145.7 8 Z" fill="#e0a040"/>
    <rect x="140.8" y="16.2" width="1.6" height="1.6" fill="#2a2018"/>
  </svg>
  <!-- zoom slider -->
  <svg class="abs" style="left:530px;top:36px" width="130" height="26" viewBox="0 0 130 26">
    <path d="M2.5 7.5 L11.5 7.5 L11.5 15 L8 18.5 L2.5 18.5 Z" fill="#f3f2ee" stroke="#8c8a86" stroke-width="1"/><path d="M11.5 15 L8 15 L8 18.5" fill="#fff" stroke="#8c8a86" stroke-width=".8"/>
    <rect x="38" y="10" width="63" height="5" rx="2.5" fill="#d6d2c8" stroke="#c6c2b6" stroke-width=".8"/>
    <rect x="19.5" y="6.5" width="20" height="12" rx="5.5" fill="#f1efea" stroke="#b9b5aa" stroke-width="1"/>
    <path d="M26.5 9.5v6M29.5 9.5v6M32.5 9.5v6" stroke="#8e8b84" stroke-width="1"/>
    <path d="M107.5 3.5 L123.5 3.5 L123.5 17 L118 22.5 L107.5 22.5 Z" fill="#f3f2ee" stroke="#8c8a86" stroke-width="1"/><path d="M123.5 17 L118 17 L118 22.5" fill="#fff" stroke="#8c8a86" stroke-width=".8"/>
  </svg>
  <div class="abs" style="left:666px;top:40px;width:1px;height:20px;background:#e0ddd6;border-right:1px solid #f8f7f4"></div>
  <!-- wrench button -->
  <div class="abs" style="left:672px;top:35px;width:37px;height:27px;border-radius:5px;background:linear-gradient(180deg,#d2cec5,#c6c2b8);box-shadow:inset 0 0 0 1px #bcb8ad"></div>
  <svg class="abs" style="left:676px;top:37px" width="32" height="24" viewBox="0 0 32 24">
    <path d="M3.2 20.2 L13.5 9.8" stroke="#2a2a2a" stroke-width="5" stroke-linecap="round"/>
    <path d="M4 19.6 L8 15.6" stroke="#e8e8e8" stroke-width="1.6" stroke-linecap="round"/>
    <path d="M13.2 10.6 Q11 6 14.6 2.8 Q16.6 1.4 18.8 2 L15.8 5.4 L16.6 8 L19.2 8.8 L22.4 5.6 Q23 8.6 20.6 11 Q17.6 13.4 14 11.4 Z" fill="#e9e9e9" stroke="#6a6a6a" stroke-width=".9"/>
    <path d="M23.5 17.6 l3.2 3.2 l3.2 -3.2" fill="none" stroke="#0c0c0c" stroke-width="2.3"/>
  </svg>
  <!-- breadcrumb -->
  <svg class="abs" style="left:166px;top:71px" width="8" height="10"><path d="M1.5 1.5 L5.5 5 L1.5 8.5" fill="none" stroke="#0c0c0c" stroke-width="2.3"/></svg>
  <div class="abs" style="left:179px;top:66px;height:20px;line-height:20px;font-weight:bold;font-size:13px;-webkit-text-stroke:.15px">Видео</div>
  <!-- sidebar scrollbar -->
  <svg class="abs" style="left:140px;top:36px" width="20" height="362" viewBox="0 0 20 362">
    <defs><linearGradient id="gth" x1="0" y1="0" x2="1" y2="0"><stop offset="0" stop-color="#faf9f6"/><stop offset="1" stop-color="#e4e1d9"/></linearGradient></defs>
    <path d="M6.2 6.6 L9.6 3.4 L13 6.6" fill="none" stroke="#a3a19a" stroke-width="2.1"/>
    <rect x="6.6" y="300" width="5" height="31.6" rx="2.5" fill="#d3cfc5" stroke="#c4c0b5" stroke-width=".8"/>
    <rect x="2.5" y="12.5" width="14" height="298" rx="7" fill="url(#gth)" stroke="#bfbbb0" stroke-width="1"/>
    <path d="M6 158.5h6M6 161.5h6M6 164.5h6" stroke="#a5a29a" stroke-width="1"/>
    <path d="M6.2 343.6 L9.6 340.4 L13 343.6" fill="none" stroke="#a19f98" stroke-width="1.9"/>
    <path d="M6.2 353.4 L9.6 356.6 L13 353.4" fill="none" stroke="#0c0c0c" stroke-width="2.3"/>
  </svg>
  <svg class="abs" style="left:157px;top:211px" width="6" height="8"><path d="M4.5 1.5 Q1.5 1.5 1.5 4 Q1.5 6.5 4.5 6.5" fill="none" stroke="#cfccc4" stroke-width="1"/></svg>
  <!-- horizontal scrollbar -->
  <svg class="abs" style="left:164px;top:383px" width="548" height="18" viewBox="0 0 548 18">
    <defs><linearGradient id="gth2" x1="0" y1="0" x2="0" y2="1"><stop offset="0" stop-color="#faf9f6"/><stop offset="1" stop-color="#e4e1d9"/></linearGradient></defs>
    <path d="M9.4 5.4 L6.2 8.8 L9.4 12.2" fill="none" stroke="#a3a19a" stroke-width="2.1"/>
    <rect x="340" y="6" width="175.5" height="5.4" rx="2.7" fill="#d3cfc5" stroke="#c4c0b5" stroke-width=".8"/>
    <rect x="15.5" y="2.5" width="334" height="13" rx="6.5" fill="url(#gth2)" stroke="#bfbbb0" stroke-width="1"/>
    <path d="M179.5 6v6M182.5 6v6M185.5 6v6" stroke="#a5a29a" stroke-width="1"/>
    <path d="M528.4 5.4 L525.2 8.8 L528.4 12.2" fill="none" stroke="#a3a19a" stroke-width="2.1"/>
    <path d="M536.8 5.4 L540 8.8 L536.8 12.2" fill="none" stroke="#0c0c0c" stroke-width="2.3"/>
  </svg>
  <!-- name / filter -->
  <div class="abs lbl" style="left:60px;width:97px;top:408px"><u>И</u>мя:</div>
  <div class="abs" style="left:163px;top:407.2px;width:462px;height:23px;box-sizing:border-box;border:1.5px solid #4f7fb4;border-radius:5px;background:#dfe7ee;box-shadow:0 0 2px rgba(80,130,190,.6)"></div>
  <svg class="abs" style="left:606px;top:413px" width="14" height="12"><path d="M2.8 3.6 L6.6 7.4 L10.4 3.6" fill="none" stroke="#111" stroke-width="2"/></svg>
  <div class="abs lbl" style="left:60px;width:97px;top:441px;letter-spacing:.4px"><u>Ф</u>ильтр:</div>
  <div class="abs" style="left:163px;top:441.5px;width:462px;height:20px;box-sizing:border-box;border:1px solid #d4d2cb;border-radius:4px;background:#dfe7ee;box-shadow:inset 0 1px 1px rgba(0,0,0,.08)"></div>
  <div class="abs" style="left:168px;top:441px;height:21px;line-height:21px;letter-spacing:.37px">Мультимедиа</div>
  <svg class="abs" style="left:588px;top:444px" width="32" height="14" viewBox="0 0 32 14">
    <path d="M1.6 7 L5.6 2 L15.4 2 L15.4 12 L5.6 12 Z" fill="#5f5f5f"/>
    <path d="M8 4.6 L12.8 9.4 M12.8 4.6 L8 9.4" stroke="#f2f2f2" stroke-width="1.9"/>
    <path d="M20.8 4.8 L24.6 8.6 L28.4 4.8" fill="none" stroke="#111" stroke-width="2"/>
  </svg>
  <div class="abs dbtn" style="left:632px;top:406px;letter-spacing:.55px;border-color:#5a86b8;box-shadow:0 0 2px rgba(80,130,190,.7)"><u>О</u>ткрыть</div>
  <div class="abs dbtn" style="left:632px;top:439.5px;letter-spacing:.15px">О<u>т</u>мена</div>
</div>
<!-- MAIN POPUP MENU -->
<div class="pop" style="left:1055px;top:132px;width:311px;height:169px">
  <div class="abs" style="left:3px;top:24px;width:307px;height:21px;background:linear-gradient(90deg,#d7d3c9 0,#cfcbc0 40%,#cdc9be 78%,#f1efea 100%);border-radius:2px"></div>
  <div class="mi" style="left:22px;top:0px">Сортировка</div>
  <div class="mi" style="left:22px;top:23px"><u>В</u>ид</div>
  <div class="abs" style="left:6px;top:47.5px;width:300px;height:1px;background:linear-gradient(90deg,#f1efea,#d9d6cd 15%,#d9d6cd 85%,#f1efea)"></div>
  <div class="mi" style="left:22px;top:51px">Положение значка</div>
  <div class="abs" style="left:6px;top:77px;width:300px;height:1px;background:linear-gradient(90deg,#f1efea,#d9d6cd 15%,#d9d6cd 85%,#f1efea)"></div>
  <div class="mi" style="left:22px;top:80px;letter-spacing:.26px">Показывать скрытые файлы</div>
  <div class="mi" style="left:22px;top:102px">Показать панель быстрого доступа</div>
  <div class="mi" style="left:22px;top:124px">Показать закладки</div>
  <div class="mi" style="left:22px;top:146px">Миниатюра сбоку</div>
  <div class="mi" style="left:264px;top:80px">Alt+.</div>
  <div class="mi" style="left:264px;top:102px">F9</div>
  <svg class="abs" style="left:296px;top:5px" width="10" height="70" viewBox="0 0 10 70">
    <path d="M2.8 2.6 L6.4 6 L2.8 9.4 M2.8 24.6 L6.4 28 L2.8 31.4 M2.8 53.6 L6.4 57 L2.8 60.4" fill="none" stroke="#0c0c0c" stroke-width="2.3"/>
  </svg>
  <div class="cb" style="left:4px;top:84px"></div>
  <div class="cb" style="left:4px;top:106px"></div>
  <div class="cb" style="left:4px;top:128px"></div>
  <div class="cb" style="left:4px;top:150px"></div>
  <svg class="abs" style="left:4px;top:84px" width="16" height="40" viewBox="0 0 16 40">
    <path d="M4 7.6 L7 11 L12.4 3.4 M4 29.6 L7 33 L12.4 25.4" fill="none" stroke="#0c0c0c" stroke-width="2.2" stroke-linejoin="round"/>
  </svg>
</div>
<!-- SUBMENU -->
<div class="pop" style="left:838px;top:155px;width:218px;height:90px">
  <div class="mi" style="left:23px;top:0px;letter-spacing:.1px">Краткое представление</div>
  <div class="mi" style="left:23px;top:22px">Таблица</div>
  <div class="mi" style="left:23px;top:44px">Разворачиваемый список</div>
  <div class="mi" style="left:23px;top:66px">Разворачиваемая таблица</div>
  <div class="abs" style="left:0px;top:1px;width:19px;height:19px;border-radius:3px;background:#d9d5cb;box-shadow:inset 0 0 0 1px #b7b2a6"></div>
  <svg class="abs" style="left:2px;top:3px" width="16" height="82" viewBox="0 0 16 82">
    <g id="vi0"><rect x=".5" y=".5" width="15" height="15" fill="#fdfdfd" stroke="#c9ccd4"/><rect x="1" y="1" width="14" height="2.4" fill="#e3e6ec"/>
      <path d="M2.5 6h3v2.4h-3zM7 6h3v2.4h-3zM11.2 6h2.6v2.4h-2.6zM2.5 10.4h3v2.4h-3zM7 10.4h3v2.4h-3z" fill="#2c5db6"/></g>
    <g transform="translate(0,22)"><rect x=".5" y=".5" width="15" height="15" fill="#fdfdfd" stroke="#c9ccd4"/><rect x="1" y="1" width="14" height="2.4" fill="#e3e6ec"/>
      <path d="M2.5 5.6h3v2.6h-3zM2.5 10.2h3v2.6h-3z" fill="#2c5db6"/><path d="M7 6.2h6M7 8h4.5M7 10.8h6M7 12.6h4.5" stroke="#a9aeb8" stroke-width=".9"/></g>
    <g transform="translate(0,44)"><rect x=".5" y=".5" width="15" height="15" fill="#fdfdfd" stroke="#c9ccd4"/><rect x="1" y="1" width="14" height="2.4" fill="#e3e6ec"/>
      <path d="M3.5 4.5v7.5h3M3.5 8h3" fill="none" stroke="#8d929c" stroke-width=".9"/><path d="M6.6 4.6h2.8v2.4h-2.8zM6.6 7.6h2.8v2.4h-2.8zM6.6 10.8h2.8v2.4h-2.8z" fill="#2c5db6"/></g>
    <g transform="translate(0,66)"><rect x=".5" y=".5" width="15" height="15" fill="#fdfdfd" stroke="#c9ccd4"/><rect x="1" y="1" width="14" height="2.4" fill="#e3e6ec"/>
      <path d="M3.5 4.5v7.5h3M3.5 8h3" fill="none" stroke="#8d929c" stroke-width=".9"/><path d="M6.6 4.6h2.8v2.4h-2.8zM6.6 7.6h2.8v2.4h-2.8zM6.6 10.8h2.8v2.4h-2.8z" fill="#2c5db6"/></g>
  </svg>
</div>
</div>
</body>
</html>
